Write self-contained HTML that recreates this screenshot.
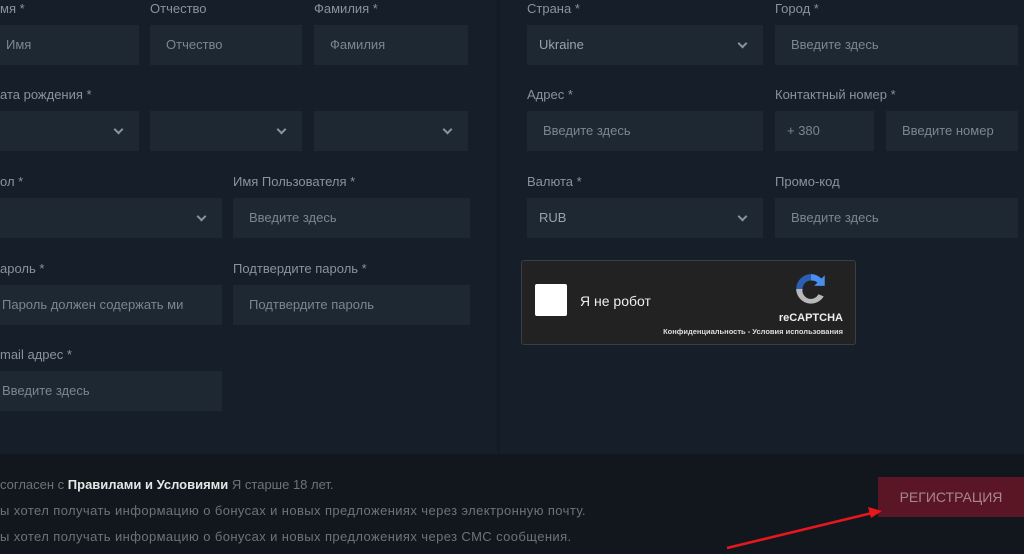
<!DOCTYPE html><html><head><meta charset="utf-8"><style>
*{margin:0;padding:0;box-sizing:border-box}
body{width:1024px;height:554px;overflow:hidden;background:#161f29;font-family:"Liberation Sans",sans-serif;position:relative}
.l{position:absolute;color:#8a939c;font-size:13px}
.i{position:absolute;height:40px;background:#1d2833;color:#7d868f;font-size:13px;line-height:40px;padding-left:16px;white-space:nowrap;overflow:hidden}
.s::after{content:"";position:absolute;right:17px;top:15px;width:5px;height:5px;border-right:2px solid #8a939c;border-bottom:2px solid #8a939c;transform:rotate(45deg)}
.v{color:#9aa2aa;padding-left:12px}
.bot{position:absolute;left:0;top:454px;width:1024px;height:100px;background:#12171e}
.t{position:absolute;left:0;color:#6b737b;font-size:13px;white-space:nowrap}
</style></head><body>
<div style="position:absolute;left:497px;top:0;width:3px;height:454px;background:#121a22"></div>
<div class="l" style="left:0;top:1px">мя *</div>
<div class="l" style="left:150px;top:1px">Отчество</div>
<div class="l" style="left:314px;top:1px">Фамилия *</div>
<div class="i" style="left:-10px;top:25px;width:149px">Имя</div>
<div class="i" style="left:150px;top:25px;width:152px">Отчество</div>
<div class="i" style="left:314px;top:25px;width:154px">Фамилия</div>
<div class="l" style="left:0;top:87px">ата рождения *</div>
<div class="i s" style="left:-10px;top:111px;width:149px"></div>
<div class="i s" style="left:150px;top:111px;width:152px"></div>
<div class="i s" style="left:314px;top:111px;width:154px"></div>
<div class="l" style="left:0;top:174px">ол *</div>
<div class="l" style="left:233px;top:174px">Имя Пользователя *</div>
<div class="i s" style="left:-10px;top:198px;width:232px"></div>
<div class="i" style="left:233px;top:198px;width:237px">Введите здесь</div>
<div class="l" style="left:0;top:261px">ароль *</div>
<div class="l" style="left:233px;top:261px">Подтвердите пароль *</div>
<div class="i" style="left:-14px;top:285px;width:236px">Пароль должен содержать ми</div>
<div class="i" style="left:233px;top:285px;width:237px">Подтвердите пароль</div>
<div class="l" style="left:0;top:347px">mail адрес *</div>
<div class="i" style="left:-14px;top:371px;width:236px">Введите здесь</div>

<div class="l" style="left:527px;top:1px">Страна *</div>
<div class="l" style="left:775px;top:1px">Город *</div>
<div class="i s v" style="left:527px;top:25px;width:236px">Ukraine</div>
<div class="i" style="left:775px;top:25px;width:243px">Введите здесь</div>
<div class="l" style="left:527px;top:87px">Адрес *</div>
<div class="l" style="left:775px;top:87px">Контактный номер *</div>
<div class="i" style="left:527px;top:111px;width:236px">Введите здесь</div>
<div class="i" style="left:775px;top:111px;width:99px;padding-left:12px">+ 380</div>
<div class="i" style="left:886px;top:111px;width:132px">Введите номер</div>
<div class="l" style="left:527px;top:174px">Валюта *</div>
<div class="l" style="left:775px;top:174px">Промо-код</div>
<div class="i s v" style="left:527px;top:198px;width:236px">RUB</div>
<div class="i" style="left:775px;top:198px;width:243px">Введите здесь</div>

<div style="position:absolute;left:521px;top:260px;width:335px;height:85px;background:#222;border:1px solid #3a3f44;border-radius:3px">
<div style="position:absolute;left:13px;top:23px;width:32px;height:32px;background:#fff;border-radius:2px"></div>
<div style="position:absolute;left:58px;top:32px;color:#eee;font-size:14px">Я не робот</div>
<svg style="position:absolute;left:271px;top:10px" width="36" height="36" viewBox="0 0 34 34"><path d="M17 3a14 14 0 0 1 12 7l-5 2a8 8 0 0 0-7-3z" fill="#4a8ef0"/><path d="M3 17a14 14 0 0 1 14-14v6a8 8 0 0 0-8 8z" fill="#2b5fb5"/><path d="M3 17a14 14 0 0 0 26 7l-5-2a8 8 0 0 1-15-5z" fill="#b8b8b8"/><path d="M30 4v10h-10z" fill="#4a8ef0"/></svg>
<div style="position:absolute;right:12px;top:51px;color:#eee;font-size:11px;font-weight:bold">reCAPTCHA</div>
<div style="position:absolute;right:12px;top:66px;color:#ddd;font-size:7.5px;font-weight:bold">Конфиденциальность - Условия использования</div>
</div>

<div class="bot"></div>
<div class="t" style="top:477px">согласен с <b style="color:#e6e6e6">Правилами и Условиями</b> Я старше 18 лет.</div>
<div class="t" style="top:503px;letter-spacing:0.4px">ы хотел получать информацию о бонусах и новых предложениях через электронную почту.</div>
<div class="t" style="top:529px;letter-spacing:0.4px">ы хотел получать информацию о бонусах и новых предложениях через СМС сообщения.</div>
<div style="position:absolute;left:878px;top:477px;width:146px;height:40px;background:#5a1625;color:#a8868d;font-size:14px;line-height:40px;text-align:center">РЕГИСТРАЦИЯ</div>
<svg style="position:absolute;left:0;top:0" width="1024" height="554"><line x1="727" y1="548" x2="872" y2="513" stroke="#e8171c" stroke-width="2.5"/><path d="M882 511l-14-4 3 11z" fill="#e8171c"/></svg>
</body></html>
